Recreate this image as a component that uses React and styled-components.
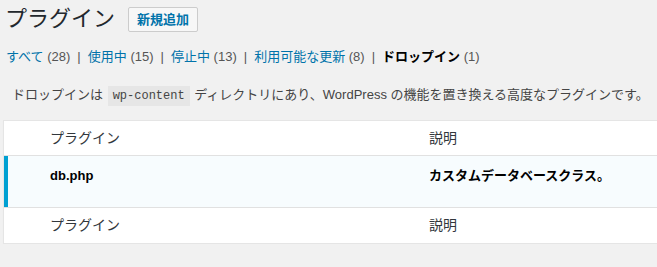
import React from "react";
import styled, { createGlobalStyle } from "styled-components";

const Global = createGlobalStyle`
  html, body { margin: 0; padding: 0; overflow: hidden; }
  body {
    background: #f1f1f1;
    font-family: "Liberation Sans", "Noto Sans CJK JP", sans-serif;
    font-size: 13px;
    color: #444;
  }
`;

const Wrap = styled.div`
  padding: 0 0 0 3px;
`;

const Header = styled.div`
  display: flex;
  align-items: center;
  gap: 13px;
  padding: 5px 0 0 2px;
  height: 28px;
`;

const Title = styled.h1`
  margin: 0;
  font-size: 22px;
  font-weight: 400;
  line-height: 28px;
  color: #23282d;
`;

const AddButton = styled.a`
  display: inline-block;
  padding: 3px 8px;
  border: 1px solid #ccc;
  border-radius: 2px;
  background: #f7f7f7;
  color: #0073aa;
  font-size: 13px;
  font-weight: 700;
  line-height: 17px;
  text-decoration: none;
`;

const Filters = styled.ul`
  list-style: none;
  margin: 0;
  padding: 14px 0 0 3px;
  display: flex;
  font-size: 13px;
  line-height: 20px;
  color: #555;
`;

const FilterItem = styled.li`
  white-space: pre;
`;

const Sep = styled.span`
  padding: 0 7px;
  color: #555;
`;

const FilterLink = styled.a`
  color: ${(p) => (p.$current ? "#000" : "#0073aa")};
  font-weight: ${(p) => (p.$current ? 700 : 400)};
  text-decoration: none;
`;

const Count = styled.span`
  color: #555;
  font-weight: 400;
`;

const Desc = styled.p`
  margin: 0;
  padding: 18px 0 0 9px;
  line-height: 20px;
  color: #444;
  font-size: 13px;
`;

const Code = styled.code`
  font-family: "Liberation Mono", monospace;
  font-size: 12px;
  background: #e6e6e6;
  padding: 3px 5px 3px;
  margin: 0 1px;
`;

const Table = styled.div`
  margin-top: 14px;
  width: 680px;
  background: #fff;
  border: 1px solid #e5e5e5;
  box-shadow: 0 1px 1px rgba(0, 0, 0, 0.04);
`;

const Row = styled.div`
  display: grid;
  grid-template-columns: 36px 379px 1fr;
  min-height: ${(p) => p.$h}px;
  background: ${(p) => (p.$active ? "#f7fcfe" : "#fff")};
  border-top: ${(p) => (p.$first ? "none" : "1px solid #e1e1e1")};
  box-shadow: ${(p) => (p.$active ? "inset 4px 0 0 #00a0d2" : "none")};
`;

const Cell = styled.div`
  padding: ${(p) => (p.$head ? "7px 10px" : "10px 10px")};
  font-size: ${(p) => (p.$head ? "14px" : "13px")};
  line-height: 20px;
  color: ${(p) => (p.$head ? "#32373c" : "#000")};
  font-weight: ${(p) => (p.$bold ? 700 : 400)};
`;

const filters = [
  { label: "すべて", count: 28 },
  { label: "使用中", count: 15 },
  { label: "停止中", count: 13 },
  { label: "利用可能な更新", count: 8 },
  { label: "ドロップイン", count: 1, current: true },
];

export default function App() {
  return (
    <Wrap>
      <Global />
      <Header>
        <Title>プラグイン</Title>
        <AddButton href="#">新規追加</AddButton>
      </Header>
      <Filters>
        {filters.map((f, i) => (
          <FilterItem key={f.label}>
            <FilterLink href="#" $current={f.current}>
              {f.label} <Count>({f.count})</Count>
            </FilterLink>
            {i < filters.length - 1 ? <Sep>|</Sep> : null}
          </FilterItem>
        ))}
      </Filters>
      <Desc>
        ドロップインは <Code>wp-content</Code> ディレクトリにあり、WordPress
        の機能を置き換える高度なプラグインです。
      </Desc>
      <Table>
        <Row $first $h={34}>
          <Cell $head />
          <Cell $head>プラグイン</Cell>
          <Cell $head>説明</Cell>
        </Row>
        <Row $active $h={51}>
          <Cell />
          <Cell $bold>db.php</Cell>
          <Cell $bold>カスタムデータベースクラス。</Cell>
        </Row>
        <Row $h={35}>
          <Cell $head />
          <Cell $head>プラグイン</Cell>
          <Cell $head>説明</Cell>
        </Row>
      </Table>
    </Wrap>
  );
}
